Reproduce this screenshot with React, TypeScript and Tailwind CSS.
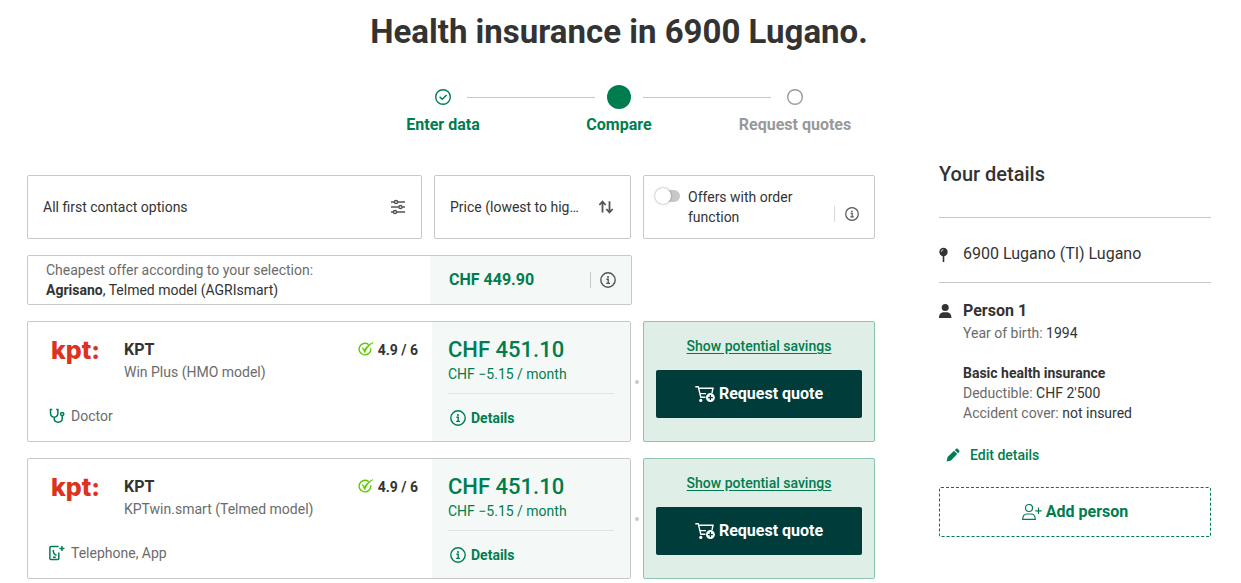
import React from "react";

type IconProps = { className?: string };

function InfoIcon({ className = "size-4" }: IconProps) {
  return (
    <svg viewBox="0 0 16 16" className={className} fill="none" stroke="currentColor" aria-hidden="true">
      <circle cx="8" cy="8" r="7.2" strokeWidth="1.4" />
      <path d="M6.4 7.3H8.2V11.3M6.2 11.4H10" strokeWidth="1.4" />
      <circle cx="8" cy="4.9" r="1" fill="currentColor" stroke="none" />
    </svg>
  );
}

function SlidersIcon() {
  return (
    <svg viewBox="0 0 16 16" className="size-4 shrink-0" fill="none" stroke="currentColor" strokeWidth="1.5" aria-hidden="true">
      <path d="M1 3H4.3M7.7 3H15M1 8H8.8M12.2 8H15M1 13H3.3M6.7 13H15" />
      <circle cx="6" cy="3" r="1.6" />
      <circle cx="10.5" cy="8" r="1.6" />
      <circle cx="5" cy="13" r="1.6" />
    </svg>
  );
}

function SortIcon() {
  return (
    <svg viewBox="0 0 16 16" className="size-4 shrink-0" fill="none" stroke="currentColor" strokeWidth="1.8" aria-hidden="true">
      <path d="M4.5 13.5V2.8M1.3 6L4.5 2.6L7.7 6M11.5 2.2V13M8.3 10L11.5 13.4L14.7 10" />
    </svg>
  );
}

function StethoscopeIcon() {
  return (
    <svg viewBox="0 0 16 16" className="size-4 shrink-0" fill="none" stroke="currentColor" strokeWidth="1.5" aria-hidden="true">
      <path d="M3.2 1.4H1.5V4.8C1.5 7.6 3 9.2 5.2 9.2S8.9 7.6 8.9 4.8V1.4H7.2M5.2 9.2V10.6C5.2 13 6.6 14.2 9.2 14.2S13.2 13 13.2 10.6V7.8" />
      <circle cx="13.2" cy="6" r="1.6" />
    </svg>
  );
}

function PhoneAppIcon() {
  return (
    <svg viewBox="0 0 16 16" className="size-4 shrink-0" fill="none" stroke="currentColor" strokeWidth="1.5" aria-hidden="true">
      <path d="M9.6 1.5H1.9C1.3 1.5 0.9 1.9 0.9 2.5V13.5C0.9 14.1 1.3 14.5 1.9 14.5H8.8C9.4 14.5 9.8 14.1 9.8 13.5V7.5M12.9 1V6M10.4 3.5H15.4" />
      <path d="M4.4 4.8C4.1 7.2 5.4 9.6 7.6 10.2M4 12.2H6.8" />
    </svg>
  );
}

function RatingIcon() {
  return (
    <svg viewBox="0 0 16 16" className="size-4 shrink-0" fill="none" stroke="#5fc800" aria-hidden="true">
      <path d="M10.6 2.6A5.8 5.8 0 1 0 12.7 6.4" strokeWidth="1.4" />
      <path d="M4.2 5.6L6.8 10.8C8.4 6.6 11 3 15 0.6C11 2.2 8.6 4.6 6.7 7.4Z" fill="#5fc800" strokeWidth="0.7" />
    </svg>
  );
}

function CartPlusIcon() {
  return (
    <svg viewBox="0 0 20 18" className="h-[18px] w-5 shrink-0" fill="none" stroke="currentColor" strokeWidth="1.4" aria-hidden="true">
      <path d="M0.3 1.7H3.2L5.8 12.2H10.4M3.7 3.2H18L17 8M5 8.6H11" />
      <circle cx="5.8" cy="15.4" r="1.6" fill="currentColor" stroke="none" />
      <circle cx="15.4" cy="12.6" r="4.5" fill="currentColor" stroke="none" />
      <path d="M15.4 10.1V15.1M12.9 12.6H17.9" stroke="#003c3a" strokeWidth="1.3" />
    </svg>
  );
}

function PinIcon() {
  return (
    <svg viewBox="0 0 10 16" className="mt-[2px] h-4 w-[10px] shrink-0" aria-hidden="true">
      <circle cx="4.5" cy="5" r="4.2" fill="currentColor" />
      <path d="M3.7 9H5.3V15H3.7Z" fill="currentColor" />
      <path d="M2.3 4.8A2.2 2.2 0 0 1 4.4 2.7" fill="none" stroke="#fff" strokeWidth="0.8" />
    </svg>
  );
}

function PersonIcon() {
  return (
    <svg viewBox="0 0 14 16" className="mt-1 h-4 w-[14px] shrink-0" fill="currentColor" aria-hidden="true">
      <circle cx="6.2" cy="4.6" r="3.5" />
      <path d="M0 15C-0.2 11.4 1.8 9.4 4 9.2H8.4C10.6 9.4 12.6 11.4 12.4 15Z" />
    </svg>
  );
}

function PencilIcon() {
  return (
    <svg viewBox="0 0 14 14" className="size-[14px] shrink-0" fill="currentColor" aria-hidden="true">
      <path d="M0.6 13.4L1.6 9L8 2.8L11.2 6L5 12.4ZM8.8 2L10.3 0.7C10.8 0.4 11.2 0.4 11.6 0.8L13.2 2.4C13.6 2.8 13.6 3.2 13.3 3.7L12 5.2Z" />
    </svg>
  );
}

function AddPersonIcon() {
  return (
    <svg viewBox="0 0 20 16" className="h-4 w-5 shrink-0" fill="none" stroke="currentColor" strokeWidth="1.2" aria-hidden="true">
      <circle cx="7" cy="4" r="3.5" />
      <path d="M0.7 15.4C0.7 11.6 2.6 10 5 10H9C11.4 10 13.3 11.6 13.3 15.4Z" />
      <path d="M16.5 3.6V10M13.3 6.8H19.7" />
    </svg>
  );
}

function Steps() {
  return (
    <ol className="mx-auto mt-[33px] flex text-base leading-6 font-bold">
      <li className="flex w-44 flex-col items-center text-[#007d4f]">
        <span className="flex h-6 items-center">
          <svg viewBox="0 0 16 16" className="size-4" fill="none" stroke="currentColor" aria-hidden="true">
            <circle cx="8" cy="8" r="7.3" strokeWidth="1.4" />
            <path d="M4.6 7.8L7.2 10.2L11.6 6" strokeWidth="1.5" />
          </svg>
        </span>
        <a href="#data" className="mt-1">Enter data</a>
      </li>
      <li className="flex w-44 flex-col items-center text-[#007d4f]">
        <span className="flex h-6 items-center gap-3">
          <span className="h-px w-32 bg-[#c8c8c8]" />
          <span className="size-6 shrink-0 rounded-full bg-current" />
          <span className="h-px w-32 bg-[#c8c8c8]" />
        </span>
        <span className="mt-1" aria-current="step">Compare</span>
      </li>
      <li className="flex w-44 flex-col items-center text-[#999]">
        <span className="flex h-6 items-center">
          <svg viewBox="0 0 16 16" className="size-4" fill="none" stroke="currentColor" aria-hidden="true">
            <circle cx="8" cy="8" r="7.3" strokeWidth="1.4" />
          </svg>
        </span>
        <span className="mt-1">Request quotes</span>
      </li>
    </ol>
  );
}

const cardBorder = "rounded-[2px] border border-[#c8c8c8]";

function Filters() {
  return (
    <div className="flex gap-3 leading-5">
      <button type="button" className={`flex h-16 flex-1 items-center justify-between px-[15px] ${cardBorder}`}>
        All first contact options
        <span className="flex text-[#555]"><SlidersIcon /></span>
      </button>
      <button type="button" className={`flex h-16 w-[197px] items-center justify-between pr-4 pl-[15px] ${cardBorder}`}>
        Price (lowest to hig…
        <span className="flex text-[#555]"><SortIcon /></span>
      </button>
      <div className={`flex h-16 w-[232px] px-3 py-[11px] ${cardBorder}`}>
        <label className="flex flex-1 gap-2">
          <input type="checkbox" role="switch" className="peer sr-only" />
          <span className="mt-[3px] flex h-3 w-6 shrink-0 items-center rounded-full bg-[#c8c8c8] peer-checked:justify-end">
            <span className="-ml-px size-4 shrink-0 rounded-full bg-white shadow-[0_0_2px_rgba(0,0,0,0.5)]" />
          </span>
          <span className="w-28">Offers with order function</span>
        </label>
        <span className="mt-[19px] flex h-4 items-center border-l border-[#d8d8d8] pr-[3px] pl-[10px] text-[#555]">
          <button type="button" aria-label="About the order function"><InfoIcon className="size-[14px]" /></button>
        </span>
      </div>
    </div>
  );
}

function CheapestOffer() {
  return (
    <div className={`mr-[243px] flex h-[50px] overflow-hidden leading-5 ${cardBorder}`}>
      <p className="flex-1 pt-1 pl-[18px]">
        <span className="block text-[#6b6b6b]">Cheapest offer according to your selection:</span>
        <strong>Agrisano</strong>, Telmed model (AGRIsmart)
      </p>
      <div className="flex w-[201px] items-center bg-[#f4f9f7] pr-[15px] pl-[19px]">
        <strong className="flex-1 text-base text-[#007d4f]">CHF 449.90</strong>
        <span className="flex h-4 items-center border-l border-[#c8c8c8] pl-[9px] text-[#555]">
          <button type="button" aria-label="About the cheapest offer"><InfoIcon /></button>
        </span>
      </div>
    </div>
  );
}

type Offer = { model: string; contact: string; icon: React.ReactNode };

const offers: Offer[] = [
  { model: "Win Plus (HMO model)", contact: "Doctor", icon: <StethoscopeIcon /> },
  { model: "KPTwin.smart (Telmed model)", contact: "Telephone, App", icon: <PhoneAppIcon /> },
];

function OfferCard({ offer }: { offer: Offer }) {
  return (
    <article className="flex h-[121px] items-center">
      <div className={`flex h-full flex-1 overflow-hidden ${cardBorder}`}>
        <div className="flex flex-1 flex-col justify-between pt-4 pr-[14px] pb-[15px] pl-[21px]">
          <div className="flex">
            <div className="w-[75px] pl-[2px] font-['Inter',sans-serif] text-[25px] leading-6 font-extrabold text-[#dc3220]">kpt:</div>
            <div className="flex-1">
              <h2 className="text-base leading-6 font-bold">KPT</h2>
              <p className="leading-5 text-[#6b6b6b]">{offer.model}</p>
            </div>
            <div className="flex h-6 items-center gap-1 font-bold">
              <RatingIcon />
              4.9 / 6
            </div>
          </div>
          <div className="flex items-center gap-[6px] leading-5 text-[#6b6b6b]">
            <span className="flex text-[#007d4f]">{offer.icon}</span>
            {offer.contact}
          </div>
        </div>
        <div className="w-[198px] bg-[#f4f9f7] px-4 pt-[14px] text-[#007d4f]">
          <div className="text-[22px] leading-7 font-medium">CHF 451.10</div>
          <div className="leading-5">CHF −5.15 / month</div>
          <hr className="mt-[9px] border-[#dfe5e3]" />
          <a href="#details" className="mt-[14px] flex items-center gap-[5px] pl-[2px] leading-5 font-bold">
            <InfoIcon />
            Details
          </a>
        </div>
      </div>
      <span className="flex w-3 justify-center"><span className="size-1 rounded-full bg-[#c8c8c8]" /></span>
      <div className="flex h-full w-[232px] flex-col items-center rounded-[2px] border border-[#8cc5ab] bg-[#e0eee8] px-3 pt-[14px]">
        <a href="#savings" className="leading-5 font-medium text-[#007d4f] underline underline-offset-2">Show potential savings</a>
        <button type="button" className="mt-[14px] flex h-12 w-full items-center justify-center gap-1 rounded-[2px] bg-[#003c3a] text-base font-bold text-white">
          <CartPlusIcon />
          Request quote
        </button>
      </div>
    </article>
  );
}

function Details() {
  return (
    <aside className="w-[272px] shrink-0">
      <h2 className="-mt-[15px] text-xl leading-7 font-medium">Your details</h2>
      <div className="mt-[29px] flex h-[66px] items-center gap-[14px] border-y border-[#c8c8c8] pt-2 text-base">
        <PinIcon />
        6900 Lugano (TI) Lugano
      </div>
      <div className="mt-4 flex gap-[10px] leading-5">
        <PersonIcon />
        <div>
          <h3 className="text-base leading-6 font-bold">Person 1</h3>
          <p><span className="text-[#6b6b6b]">Year of birth:</span> 1994</p>
          <h4 className="mt-5 font-bold">Basic health insurance</h4>
          <p><span className="text-[#6b6b6b]">Deductible:</span> CHF 2'500</p>
          <p><span className="text-[#6b6b6b]">Accident cover:</span> not insured</p>
        </div>
      </div>
      <a href="#edit" className="mt-[22px] ml-[7px] flex items-center gap-[10px] leading-5 font-medium text-[#007d4f]">
        <PencilIcon />
        Edit details
      </a>
      <button type="button" className="mt-[22px] flex h-[50px] w-full items-center justify-center gap-1 rounded-[2px] border border-dashed border-[#007d4f] text-base font-bold text-[#007d4f]">
        <AddPersonIcon />
        Add person
      </button>
    </aside>
  );
}

export default function App() {
  return (
    <div className="bg-white pt-3 pr-[30px] pb-1 pl-[27px] font-['Roboto',sans-serif] text-sm text-[#333]">
      <header className="flex flex-col">
        <h1 className="text-center text-[33px] leading-10 font-bold">Health insurance in 6900 Lugano.</h1>
        <Steps />
      </header>
      <div className="mt-[38px] flex items-start gap-16">
        <main className="flex min-w-0 flex-1 flex-col gap-4">
          <Filters />
          <CheapestOffer />
          {offers.map((offer) => (
            <OfferCard key={offer.model} offer={offer} />
          ))}
        </main>
        <Details />
      </div>
    </div>
  );
}
